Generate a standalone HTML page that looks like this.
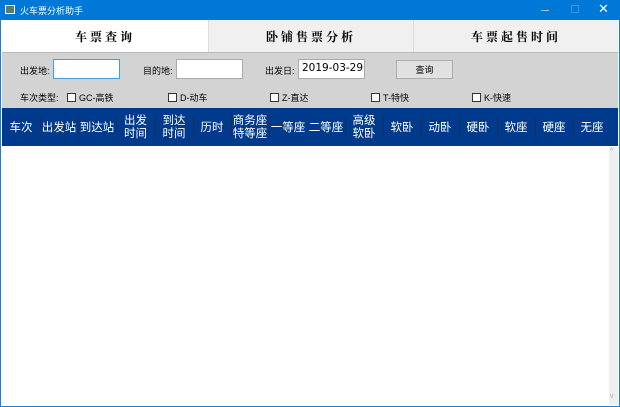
<!DOCTYPE html><html><head><meta charset="utf-8"><style>
*{margin:0;padding:0;box-sizing:border-box}
body{width:620px;height:407px;overflow:hidden;background:#fff;font-family:"Liberation Sans","Noto Sans CJK SC",sans-serif;position:relative}
.a{position:absolute}
.t{font-size:9px;color:#000}
.in{position:absolute;background:#fff;border:1px solid #aaa;height:20px}
.cb{position:absolute;width:9px;height:9px;border:1px solid #333;background:#fff}
.th{position:absolute;top:108px;height:38px;color:#fff;font-size:11.5px;display:flex;align-items:center;justify-content:center;text-align:center;line-height:13px;font-family:"Noto Sans CJK SC",sans-serif}
.sep{position:absolute;top:116px;width:1px;height:22px;background:#1a2f5e}
.tab{position:absolute;top:20px;height:32px;font-family:"Noto Serif CJK SC",serif;font-weight:bold;font-size:12px;letter-spacing:3px;display:flex;align-items:center;justify-content:center}
</style></head><body>
<div class="a" style="left:0;top:0;width:620px;height:407px;border:1px solid #1a7fd8;border-top:none"></div>
<div class="a" style="left:0;top:0;width:620px;height:20px;background:#0078d7"></div>
<div class="a" style="left:5px;top:5px;width:10px;height:9px;border:1px solid #fff;background:#5a7a6a"></div>
<div class="a t" style="left:20px;top:4px;color:#fff;font-size:9px">火车票分析助手</div>
<div class="a" style="left:541px;top:10px;width:8px;height:1px;background:#9cc7ee"></div>
<div class="a" style="left:571px;top:5px;width:8px;height:8px;border:1px solid #3d94de"></div>
<div class="a" style="left:598px;top:1px;color:#fff;font-size:13px">✕</div>
<div class="tab" style="left:2px;width:206px;background:#fff">车票查询</div>
<div class="tab" style="left:208px;width:205px;background:#f0f0f0;border-left:1px solid #ddd">卧铺售票分析</div>
<div class="tab" style="left:413px;width:205px;background:#f0f0f0;border-left:1px solid #ddd">车票起售时间</div>
<div class="a" style="left:2px;top:52px;width:616px;height:56px;background:#d3d3d3;border-top:1px solid #bbb"></div>
<div class="a t" style="left:20px;top:64px">出发地:</div>
<div class="in" style="left:53px;top:59px;width:67px;border-color:#4a9ae0"></div>
<div class="a t" style="left:143px;top:64px">目的地:</div>
<div class="in" style="left:176px;top:59px;width:67px"></div>
<div class="a t" style="left:265px;top:64px">出发日:</div>
<div class="in" style="left:298px;top:59px;width:67px;padding:2px 0 0 3px;font-family:'DejaVu Sans',sans-serif;font-size:10.5px">2019-03-29</div>
<div class="a" style="left:396px;top:60px;width:57px;height:19px;background:#e1e1e1;border:1px solid #adadad;font-size:9px;display:flex;align-items:center;justify-content:center">查询</div>
<div class="a t" style="left:20px;top:91px">车次类型:</div>
<div class="cb" style="left:67px;top:93px"></div><div class="a t" style="left:79px;top:91px">GC-高铁</div>
<div class="cb" style="left:168px;top:93px"></div><div class="a t" style="left:180px;top:91px">D-动车</div>
<div class="cb" style="left:270px;top:93px"></div><div class="a t" style="left:282px;top:91px">Z-直达</div>
<div class="cb" style="left:371px;top:93px"></div><div class="a t" style="left:383px;top:91px">T-特快</div>
<div class="cb" style="left:472px;top:93px"></div><div class="a t" style="left:484px;top:91px">K-快速</div>
<div class="a" style="left:2px;top:108px;width:616px;height:38px;background:#003a8c"></div>
<div class="th" style="left:2px;width:38px">车次</div>
<div class="th" style="left:40px;width:38px">出发站</div>
<div class="th" style="left:78px;width:38px">到达站</div>
<div class="th" style="left:116px;width:39px">出发<br>时间</div>
<div class="th" style="left:155px;width:38px">到达<br>时间</div>
<div class="th" style="left:193px;width:38px">历时</div>
<div class="th" style="left:231px;width:38px">商务座<br>特等座</div>
<div class="th" style="left:269px;width:38px">一等座</div>
<div class="th" style="left:307px;width:38px">二等座</div>
<div class="th" style="left:345px;width:38px">高级<br>软卧</div>
<div class="th" style="left:383px;width:38px">软卧</div>
<div class="th" style="left:421px;width:38px">动卧</div>
<div class="th" style="left:459px;width:38px">硬卧</div>
<div class="th" style="left:497px;width:38px">软座</div>
<div class="th" style="left:535px;width:38px">硬座</div>
<div class="th" style="left:573px;width:38px">无座</div>
<div class="sep" style="left:40px"></div><div class="sep" style="left:78px"></div><div class="sep" style="left:116px"></div><div class="sep" style="left:155px"></div><div class="sep" style="left:193px"></div><div class="sep" style="left:231px"></div><div class="sep" style="left:269px"></div><div class="sep" style="left:345px"></div><div class="sep" style="left:383px"></div><div class="sep" style="left:421px"></div><div class="sep" style="left:459px"></div><div class="sep" style="left:497px"></div><div class="sep" style="left:535px"></div><div class="sep" style="left:573px"></div>
<div class="a" style="left:609px;top:147px;width:9px;height:258px;background:#efefef"></div>
<div class="a" style="left:610px;top:148px;font-size:7px;color:#aaa">^</div>
<div class="a" style="left:610px;top:393px;font-size:7px;color:#aaa">v</div>
</body></html>
